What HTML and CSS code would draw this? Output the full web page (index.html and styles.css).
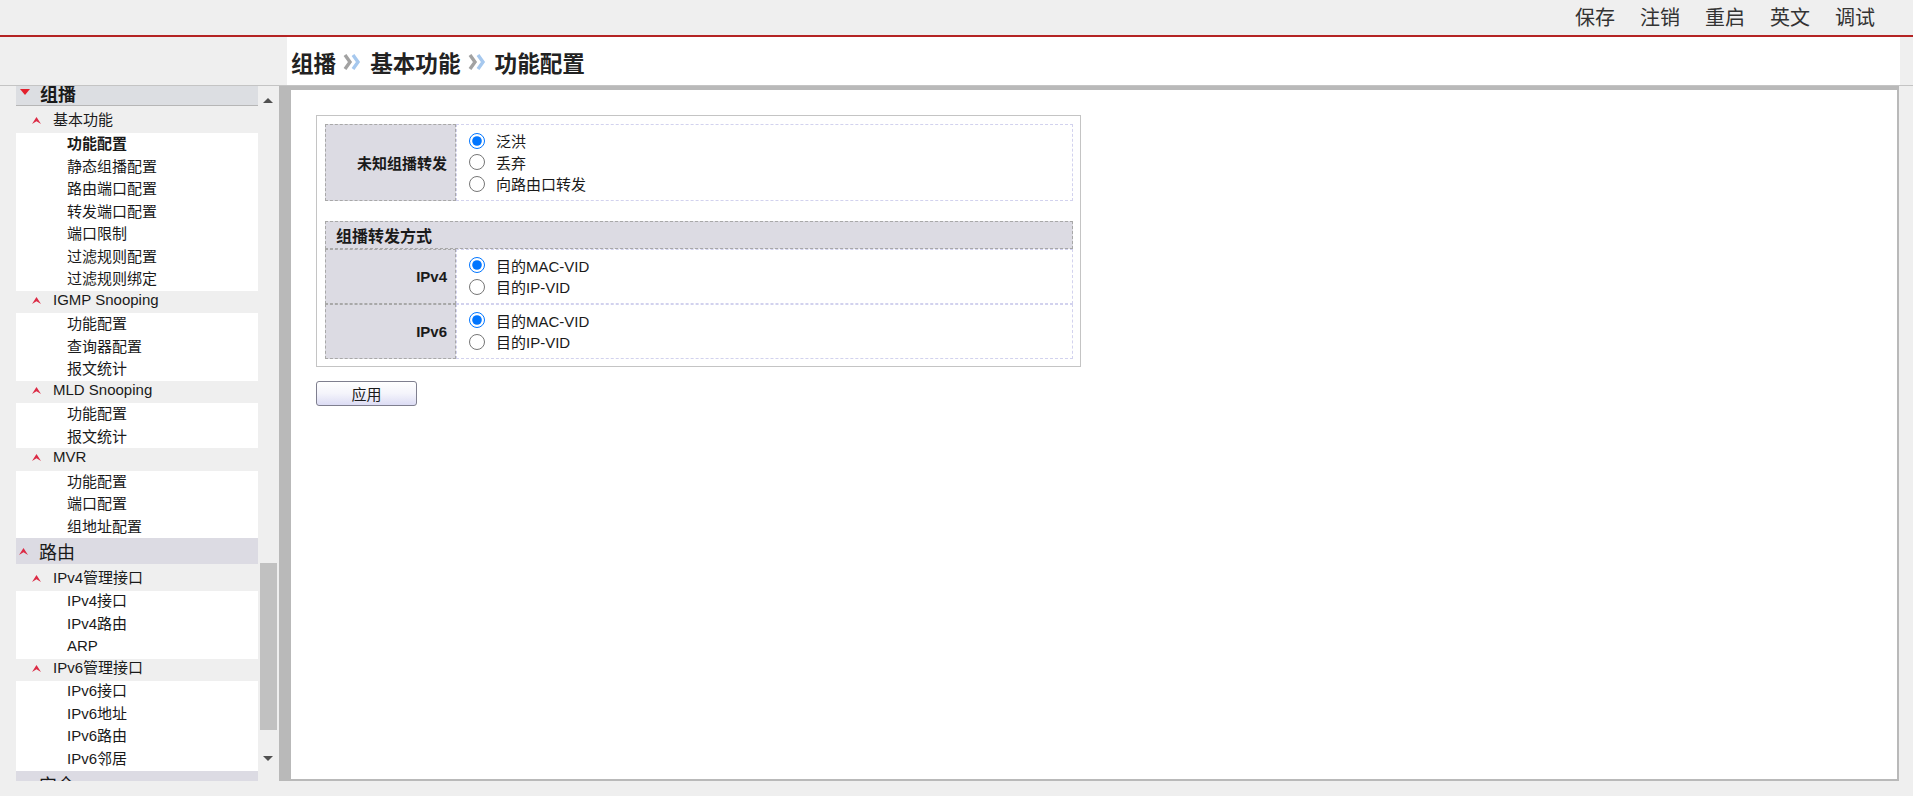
FILE: index.html
```html
<!DOCTYPE html>
<html lang="zh-CN">
<head>
    <meta charset="UTF-8">
    <title>功能配置</title>
    <link rel="stylesheet" href="styles.css">
</head>
<body>

    <div class="topbar">
        <a>保存</a>
        <a>注销</a>
        <a>重启</a>
        <a>英文</a>
        <a>调试</a>
    </div>

    <div class="crumbbar">
        <div class="crumb-left"></div>
        <div class="crumb">
            <span>组播</span>
            <svg class="sep" width="19" height="18" viewBox="0 0 19 18"><path d="M3 2l5 7-5 7" fill="none" stroke="#a2a2a2" stroke-width="3.4"/><path d="M11 2l5 7-5 7" fill="none" stroke="#a6c8ee" stroke-width="3.4"/></svg>
            <span>基本功能</span>
            <svg class="sep" width="19" height="18" viewBox="0 0 19 18"><path d="M3 2l5 7-5 7" fill="none" stroke="#a2a2a2" stroke-width="3.4"/><path d="M11 2l5 7-5 7" fill="none" stroke="#a6c8ee" stroke-width="3.4"/></svg>
            <span>功能配置</span>
        </div>
        <div class="crumb-right"></div>
    </div>

    <div class="main">
        <div class="sidebar">
            <div class="menu">
                <div class="l1 active">
                    <svg class="tri" width="10" height="6" viewBox="0 0 10 6"><path d="M0 0h10L5 6z" fill="#e3202c"/></svg>
                    <span>组播</span>
                </div>
                <div class="l2 first"><svg class="caret" width="9" height="7" viewBox="0 0 9 7"><path d="M0 7L4.5 0 9 7 4.5 4.2z" fill="#dc2b45"/></svg>基本功能</div>
                <div class="l3-group">
                    <div class="l3 current">功能配置</div>
                    <div class="l3">静态组播配置</div>
                    <div class="l3">路由端口配置</div>
                    <div class="l3">转发端口配置</div>
                    <div class="l3">端口限制</div>
                    <div class="l3">过滤规则配置</div>
                    <div class="l3">过滤规则绑定</div>
                </div>
                <div class="l2"><svg class="caret" width="9" height="7" viewBox="0 0 9 7"><path d="M0 7L4.5 0 9 7 4.5 4.2z" fill="#dc2b45"/></svg>IGMP Snooping</div>
                <div class="l3-group">
                    <div class="l3">功能配置</div>
                    <div class="l3">查询器配置</div>
                    <div class="l3">报文统计</div>
                </div>
                <div class="l2"><svg class="caret" width="9" height="7" viewBox="0 0 9 7"><path d="M0 7L4.5 0 9 7 4.5 4.2z" fill="#dc2b45"/></svg>MLD Snooping</div>
                <div class="l3-group">
                    <div class="l3">功能配置</div>
                    <div class="l3">报文统计</div>
                </div>
                <div class="l2"><svg class="caret" width="9" height="7" viewBox="0 0 9 7"><path d="M0 7L4.5 0 9 7 4.5 4.2z" fill="#dc2b45"/></svg>MVR</div>
                <div class="l3-group">
                    <div class="l3">功能配置</div>
                    <div class="l3">端口配置</div>
                    <div class="l3">组地址配置</div>
                </div>
                <div class="l1">
                    <svg class="up" width="9" height="7" viewBox="0 0 9 7"><path d="M0 7L4.5 0 9 7 4.5 4.2z" fill="#dc2b45"/></svg>
                    <span>路由</span>
                </div>
                <div class="l2 first"><svg class="caret" width="9" height="7" viewBox="0 0 9 7"><path d="M0 7L4.5 0 9 7 4.5 4.2z" fill="#dc2b45"/></svg>IPv4管理接口</div>
                <div class="l3-group">
                    <div class="l3 latin">IPv4接口</div>
                    <div class="l3 latin">IPv4路由</div>
                    <div class="l3 latin">ARP</div>
                </div>
                <div class="l2"><svg class="caret" width="9" height="7" viewBox="0 0 9 7"><path d="M0 7L4.5 0 9 7 4.5 4.2z" fill="#dc2b45"/></svg>IPv6管理接口</div>
                <div class="l3-group">
                    <div class="l3 latin">IPv6接口</div>
                    <div class="l3 latin">IPv6地址</div>
                    <div class="l3 latin">IPv6路由</div>
                    <div class="l3 latin">IPv6邻居</div>
                </div>
                <div class="l1">
                    <svg class="up" width="9" height="7" viewBox="0 0 9 7"><path d="M0 0L4.5 7 9 0 4.5 2.8z" fill="#dc2b45"/></svg>
                    <span>安全</span>
                </div>
            </div>
            <div class="scrollbar">
                <div class="arrow"><svg width="10" height="5" viewBox="0 0 10 5"><path d="M0 5h10L5 0z" fill="#505050"/></svg></div>
                <div class="track"><div class="thumb"></div></div>
                <div class="arrow down"><svg width="10" height="5" viewBox="0 0 10 5"><path d="M0 0h10L5 5z" fill="#505050"/></svg></div>
            </div>
        </div>

        <div class="content">
            <div class="panel">
                <table class="form">
                    <tr>
                        <th>未知组播转发</th>
                        <td>
                            <label><input type="radio" name="unknown" checked>泛洪</label>
                            <label><input type="radio" name="unknown">丢弃</label>
                            <label><input type="radio" name="unknown">向路由口转发</label>
                        </td>
                    </tr>
                </table>
                <table class="form second">
                    <tr>
                        <th colspan="2" class="title">组播转发方式</th>
                    </tr>
                    <tr>
                        <th>IPv4</th>
                        <td>
                            <label><input type="radio" name="v4" checked>目的MAC-VID</label>
                            <label><input type="radio" name="v4">目的IP-VID</label>
                        </td>
                    </tr>
                    <tr>
                        <th>IPv6</th>
                        <td>
                            <label><input type="radio" name="v6" checked>目的MAC-VID</label>
                            <label><input type="radio" name="v6">目的IP-VID</label>
                        </td>
                    </tr>
                </table>
            </div>
            <button class="apply">应用</button>
        </div>
    </div>

</body>
</html>
```

FILE: styles.css
```css
body {
    margin: 0;
    height: 796px;
    overflow: hidden;
    background-color: #efefef;
    font-family: "Liberation Sans", "Noto Sans CJK SC", sans-serif;
    color: #1a1a1a;
}
.topbar {
    height: 35px;
    border-bottom: 2px solid #b42323;
    display: flex;
    justify-content: flex-end;
    align-items: center;
    gap: 25px;
    padding-right: 38px;
}
.topbar a {
    font-size: 20px;
    line-height: 24px;
    color: #333;
    cursor: pointer;
}
.crumbbar {
    height: 48px;
    display: flex;
}
.crumb-left {
    width: 287px;
}
.crumb-right {
    width: 13px;
}
.crumb {
    flex: 1;
    background-color: #fff;
    display: flex;
    align-items: center;
    padding-left: 4px;
    padding-top: 2px;
    font-size: 22.6px;
    font-weight: bold;
    color: #222;
}
.crumb .sep {
    margin: 0 9px 0 6px;
}
.main {
    height: 695px;
    border-top: 1px solid #c4c4c4;
    display: flex;
}
.sidebar {
    width: 263px;
    padding-left: 16px;
    display: flex;
}
.menu {
    width: 242px;
    height: 695px;
    overflow: hidden;
    font-size: 15px;
}
.menu > :first-child {
    margin-top: -6px;
}
.l1 {
    height: 26px;
    display: flex;
    align-items: center;
    background-color: #dcdbe3;
    font-size: 18px;
    padding-left: 3px;
}
.l1 .up {
    margin-right: 11px;
}
.l1.active {
    height: 25px;
    background-color: #dcdee2;
    border-bottom: 1px solid #b6b6b6;
    font-weight: bold;
    padding-left: 4px;
}
.l1 .tri {
    align-self: flex-start;
    margin-top: 9px;
    margin-right: 10px;
}
.l2 {
    height: 22.5px;
    line-height: 17px;
    padding-left: 16px;
}
.l2.first {
    padding-top: 4.5px;
}
.l2 .caret {
    margin-right: 12px;
    vertical-align: 1px;
}
.l3-group {
    background-color: #fff;
}
.l3 {
    height: 22.5px;
    line-height: 22px;
    padding-left: 51px;
}
.l3.latin {
    line-height: 19px;
}
.l3.current {
    font-weight: bold;
}
.scrollbar {
    width: 20px;
    display: flex;
    flex-direction: column;
    margin-right: 1px;
}
.arrow {
    height: 17px;
    display: flex;
    justify-content: center;
    align-items: flex-end;
}
.arrow.down {
    align-items: flex-start;
    padding-bottom: 8px;
}
.track {
    flex: 1;
}
.thumb {
    margin: 460px 1px 0 2px;
    height: 167px;
    background-color: #c1c1c1;
}
.content {
    flex: 1;
    margin-right: 14px;
    background-color: #fff;
    border-style: solid;
    border-color: #b9b9b9;
    border-width: 4px 2px 2px 12px;
    padding: 25px 0 0 25px;
}
.panel {
    width: 748px;
    border: 1px solid #c4c4c4;
    padding: 8px 7px 7px 8px;
}
.form {
    width: 748px;
    border-collapse: separate;
    border-spacing: 0;
    font-size: 15px;
}
.form.second {
    margin-top: 20px;
}
.form th {
    width: 120px;
    background-color: #dcdbe3;
    border: 1px dashed #a8a8a8;
    text-align: right;
    padding-right: 8px;
    font-weight: bold;
}
.form th.title {
    height: 26px;
    text-align: left;
    padding: 0 0 0 10px;
    font-size: 16px;
}
.form td {
    border: 1px dashed #d2d2ee;
    padding: 5px 0 5px 12px;
}
.form label {
    display: flex;
    align-items: center;
    gap: 11px;
    height: 21.5px;
}
.form input {
    width: 16px;
    height: 16px;
    margin: 0;
}
.apply {
    margin-top: 14px;
    width: 101px;
    height: 25px;
    border: 1px solid #7f7f8f;
    border-radius: 3px;
    background: linear-gradient(#ffffff, #f4f4fb 50%, #dcdcf4);
    font-family: "Liberation Sans", "Noto Sans CJK SC", sans-serif;
    font-size: 15px;
    color: #1a1a1a;
    padding: 0;
    cursor: pointer;
}
```
